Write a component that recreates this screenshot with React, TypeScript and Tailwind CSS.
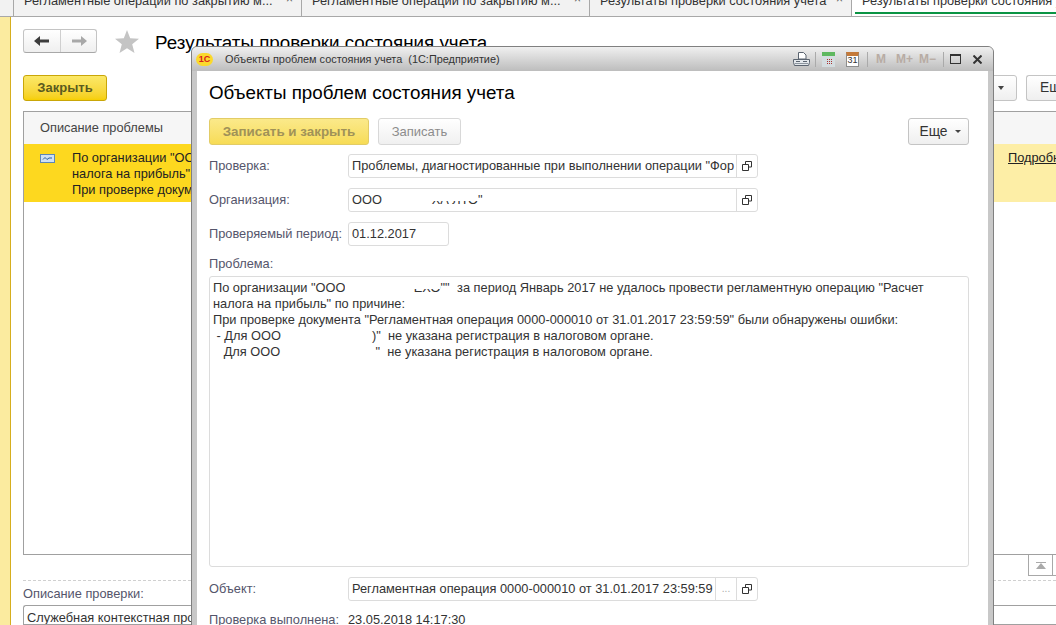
const tabTitle = "Регламентные операции по закрытию м...";

function Tab({ width, text }: { width: string; text: string }) {
  return (
    <div className={`${width} h-full shrink-0 border-r border-[#a8a8a8] overflow-hidden relative`}>
      <div className="absolute left-[10px] -top-[7px] whitespace-nowrap text-[12.8px] leading-[16px] text-[#333]">{text}</div>
      <div className="absolute right-[8px] -top-[9px] text-[12px] leading-[16px] text-[#555]">×</div>
    </div>
  );
}

function PickIcon() {
  return (
    <svg width="10" height="10" viewBox="0 0 10 10" fill="none" stroke="#333" strokeWidth="1">
      <path d="M3.5 3.5V.5h6v5.500h-3" />
      <path d="M.5 3.500h6v6h-6z" />
    </svg>
  );
}

function Field({ label, className, children, dots }: { label: string; className: string; children: React.ReactNode; dots?: boolean }) {
  return (
    <div className="flex items-center">
      <div className="w-[139px] shrink-0 text-[#55556b]">{label}</div>
      <div className={`${className} h-[24px] flex items-center border border-[#dcdcdc] rounded-[3px] bg-white`}>
        <div className="flex-1 min-w-0 pl-[3px] overflow-hidden whitespace-nowrap text-[#333] relative">{children}</div>
        {dots && <div className="w-[21px] h-full border-l border-[#dcdcdc] flex items-center justify-center text-[#aaa] text-[10px] leading-none">...</div>}
        <div className="w-[21px] h-full border-l border-[#dcdcdc] flex items-center justify-center shrink-0"><PickIcon /></div>
      </div>
    </div>
  );
}

function Redacted({ width, text }: { width: string; text: string }) {
  return (
    <span className={`${width} inline-block relative whitespace-nowrap text-right align-top h-[16px]`}>
      {text}
      <span className="absolute left-0 right-0 top-0 h-[9px] bg-white" />
    </span>
  );
}

export default function App() {
  return (
    <div className="w-[1056px] h-[625px] overflow-hidden relative bg-white flex flex-col text-[12.8px] leading-[16px] font-['Liberation_Sans',Arial,sans-serif]">
      {/* tabs */}
      <div className="h-[17px] shrink-0 flex border-b border-[#a8a8a8] bg-[#f2f2f2]">
        <div className="w-[14px] h-full shrink-0 border-r border-[#a8a8a8]" />
        <Tab width="w-[288px]" text={tabTitle} />
        <Tab width="w-[288px]" text={tabTitle} />
        <Tab width="w-[262px]" text="Результаты проверки состояния учета" />
        <div className="flex-1 h-full bg-white relative overflow-hidden">
          <div className="absolute left-[10px] -top-[7px] whitespace-nowrap text-[#333]">Результаты проверки состояния учета</div>
          <div className="absolute left-[3px] right-0 top-[12px] h-[2px] bg-[#0b9444]" />
        </div>
      </div>

      <div className="flex-1 flex min-h-0">
        <div className="w-[11px] shrink-0 bg-[#fbeb9f] border-r border-[#d6ae1e]" />
        <div className="flex-1 min-w-0 pl-[12px] pt-[12px] flex flex-col">
          {/* nav */}
          <div className="h-[24px] flex items-center">
            <div className="w-[74px] h-[24px] flex border border-[#c4c4c4] border-b-[#a8a8a8] rounded-[3px] bg-gradient-to-b from-white to-[#efefef]">
              <div className="w-[37px] flex items-center justify-center border-r border-[#cfcfcf]">
                <svg width="16" height="12" viewBox="0 0 16 12" fill="#3c3c3c"><path d="M0 6l6-5v3.500h9v3H6V11z" /></svg>
              </div>
              <div className="flex-1 flex items-center justify-center">
                <svg width="16" height="12" viewBox="0 0 16 12" fill="#a8a8a8"><path d="M16 6l-6-5v3.500H1v3h9V11z" /></svg>
              </div>
            </div>
            <svg className="ml-[18px]" width="24" height="23" viewBox="0 0 24 23" fill="#c4c4c4"><path d="M12 0l3.200 8.200 8.800.5-6.800 5.600 2.300 8.700L12 18.200l-7.500 4.800 2.300-8.700L0 8.700l8.800-.5z" /></svg>
            <div className="ml-[16px] text-[18.8px] leading-[24px] text-black whitespace-nowrap mt-[4px]">Результаты проверки состояния учета</div>
          </div>

          {/* command bar */}
          <div className="mt-[22px] h-[26px] flex">
            <div className="w-[84px] h-[26px] flex items-center justify-center rounded-[3px] border border-[#c9a608] bg-gradient-to-b from-[#fbe867] to-[#f6cf00] font-bold text-[13px] text-[#5a5a20]">Закрыть</div>
            <div className="ml-auto w-[39px] h-[26px] mr-[9px] flex items-center justify-center border border-[#c4c4c4] rounded-[3px] bg-gradient-to-b from-white to-[#efefef]">
              <div className="w-0 h-0 ml-[6px] border-x-[3px] border-x-transparent border-t-[4px] border-t-[#444]" />
            </div>
            <div className="w-[30px] h-[26px] pl-[13px] border border-r-0 border-[#c4c4c4] rounded-l-[3px] bg-gradient-to-b from-white to-[#efefef] text-[13.800px] leading-[24px] text-[#333] overflow-hidden">Еще</div>
          </div>

          {/* list */}
          <div className="mt-[10px] h-[444px] shrink-0 border border-r-0 border-[#a0a0a0] flex flex-col">
            <div className="h-[32px] shrink-0 bg-[#f6f6f6] pl-[16px] flex items-center text-[#444]">Описание проблемы</div>
            <div className="h-[58px] shrink-0 flex">
              <div className="flex-1 bg-[#fdd81f] flex pt-[6px] pl-[16px]">
                <svg className="mt-[4px]" width="15" height="9" viewBox="0 0 15 9"><rect x=".5" y=".5" width="14" height="8" fill="#cfe0f4" stroke="#5c86b8" /><path d="M3 5.500l2-2 2 2 2-1.500h3" fill="none" stroke="#2f5f9c" /></svg>
                <div className="ml-[17px] text-[#222] whitespace-nowrap">
                  По организации "ООО<br />
                  налога на прибыль" по причине:<br />
                  При проверке документа "Регламентная операция
                </div>
              </div>
              <div className="w-[62px] bg-[#fdeea6] pl-[14px] pt-[6px] overflow-hidden whitespace-nowrap text-[#222] underline">Подробнее</div>
            </div>
          </div>

          {/* splitter */}
          <div className="h-[26px] shrink-0 border-b border-dashed border-[#d0d0d0] flex justify-end">
            <div className="w-[25px] h-[21px] border border-t-0 border-[#a8a8a8] flex items-center justify-center">
              <svg width="10" height="7" viewBox="0 0 10 7" fill="#aaa"><path d="M0 0h10v1H0zM5 1l5 6H0z" /></svg>
            </div>
            <div className="w-[3px] h-[21px] border-b border-[#a8a8a8]" />
          </div>
          <div className="mt-[5px] text-[#55556b]">Описание проверки:</div>
          <div className="mt-[3px] h-[30px] border border-r-0 border-[#a0a0a0] rounded-tl-[3px] pl-[3px] pt-[4px] text-[#333] whitespace-nowrap overflow-hidden">Служебная контекстная проверка</div>
        </div>
      </div>

      {/* modal window */}
      <div className="absolute left-[191px] top-[46px] w-[803px] h-[590px] border border-[#808080] rounded-t-[6px] bg-[#c8c8c8] flex flex-col overflow-hidden">
        <div className="h-[24px] shrink-0 flex items-center bg-gradient-to-b from-[#f0f0f0] to-[#bdbdbd]">
          <div className="ml-[4px] w-[17px] h-[13px] rounded-full bg-[#fbd92b] flex items-center justify-center text-[9px] leading-none font-bold text-[#d8201c]">1С</div>
          <div className="ml-[12px] text-[10.900px] text-[#333] whitespace-nowrap">Объекты проблем состояния учета &nbsp;(1С:Предприятие)</div>
          <div className="ml-auto flex items-center">
            <svg width="17" height="14" viewBox="0 0 17 14" fill="none" stroke="#5b6470">
              <path d="M5.500.5h5l2.500 2.500v4H5.500z" fill="#fff" />
              <path d="M.5 7.500h16v3l-1 3h-14l-1-3z" fill="#e4e8ec" />
              <path d="M3 9.500h4M10 9.500h4" />
              <path d="M2 11.500h13" stroke="#8d96a0" />
            </svg>
            <div className="w-px h-[15px] bg-[#aaa] ml-[5px] mr-[6px]" />
            <svg width="13" height="15" viewBox="0 0 13 15"><rect width="13" height="15" fill="#d5dde0" /><rect width="13" height="4" fill="#5fb85f" /><path d="M5 7h1v1H5zM7 7h1v1H7zM9 7h1v1H9zM5 9h1v1H5zM7 9h1v1H7zM9 9h1v1H9zM5 11h1v1H5zM7 11h1v1H7zM9 11h1v1H9z" fill="#a33" /></svg>
            <div className="ml-[11px] w-[13px] h-[15px] bg-white border border-[#8d8d8d] border-t-[4px] border-t-[#c47a3a] flex items-center justify-center text-[9px] leading-none text-[#333]">31</div>
            <div className="w-px h-[15px] bg-[#aaa] ml-[8px] mr-[8px]" />
            <div className="w-[10px] text-[12px] font-bold text-[#b8aca4]">M</div>
            <div className="ml-[10px] text-[12px] font-bold text-[#b8aca4]">M+</div>
            <div className="ml-[6px] text-[12px] font-bold text-[#b8aca4]">M−</div>
            <div className="w-px h-[15px] bg-[#aaa] ml-[7px] mr-[6px]" />
            <div className="w-[11px] h-[10px] border border-[#333] border-t-2" />
            <svg className="ml-[12px] mr-[11px]" width="9" height="9" viewBox="0 0 9 9" stroke="#333" strokeWidth="2"><path d="M.5.500l8 8M8.500.500l-8 8" /></svg>
          </div>
        </div>
        <div className="flex-1 mx-[5px] mb-0 bg-white pl-[12px] pr-[19px] flex flex-col">
          <div className="mt-[10px] text-[18.8px] leading-[24px] text-black whitespace-nowrap">Объекты проблем состояния учета</div>
          <div className="mt-[13px] flex h-[27px]">
            <div className="w-[160px] flex items-center justify-center rounded-[3px] border border-[#e2cc66] bg-gradient-to-b from-[#fbe98a] to-[#f7dc55] font-bold text-[13.400px] text-[#a09258]">Записать и закрыть</div>
            <div className="ml-[9px] w-[83px] flex items-center justify-center rounded-[3px] border border-[#d8d8d8] bg-gradient-to-b from-white to-[#f0f0f0] text-[13px] text-[#8c8c8c]">Записать</div>
            <div className="ml-auto w-[61px] flex items-center justify-center gap-[7px] rounded-[3px] border border-[#c4c4c4] bg-gradient-to-b from-white to-[#efefef] text-[13.800px] text-[#333] pl-[3px]">
              Еще
              <div className="w-0 h-0 border-x-[3px] border-x-transparent border-t-[3px] border-t-[#444]" />
            </div>
          </div>
          <div className="mt-[9px] flex flex-col gap-[10px]">
            <Field label="Проверка:" className="w-[410px]">Проблемы, диагностированные при выполнении операции "Фор</Field>
            <Field label="Организация:" className="w-[410px]">
              ООО<Redacted width="w-[96px]" text="ХА ЛТО" />"
            </Field>
            <div className="flex items-center">
              <div className="w-[139px] shrink-0 text-[#55556b] whitespace-nowrap">Проверяемый период:</div>
              <div className="w-[101px] h-[24px] pl-[3px] border border-[#dcdcdc] rounded-[3px] flex items-center text-[#333]">01.12.2017</div>
            </div>
          </div>
          <div className="mt-[10px] text-[#55556b]">Проблема:</div>
          <div className="mt-[4px] h-[291px] shrink-0 border border-[#dcdcdc] rounded-[3px] pl-[3px] pt-[3px] text-[#333] whitespace-nowrap">
            <div>По организации "ООО<Redacted width="w-[95px]" text="ЕХО" />"" <span className="ml-[4px]">за период Январь 2017 не удалось провести регламентную операцию "Расчет</span></div>
            <div>налога на прибыль" по причине:</div>
            <div>При проверке документа "Регламентная операция 0000-000010 от 31.01.2017 23:59:59" были обнаружены ошибки:</div>
            <div>&nbsp;- Для ООО<span className="inline-block w-[100px] overflow-hidden text-right align-top h-[16px]">)"</span> &nbsp;не указана регистрация в налоговом органе.</div>
            <div>&nbsp; &nbsp;Для ООО<span className="inline-block w-[100px] overflow-hidden text-right align-top h-[16px]">"</span> &nbsp;не указана регистрация в налоговом органе.</div>
          </div>
          <div className="mt-[10px]">
            <Field label="Объект:" className="w-[410px]" dots>Регламентная операция 0000-000010 от 31.01.2017 23:59:59</Field>
          </div>
          <div className="mt-[11px] flex items-center">
            <div className="w-[139px] shrink-0 text-[#55556b] whitespace-nowrap">Проверка выполнена:</div>
            <div className="text-[#333]">23.05.2018 14:17:30</div>
          </div>
        </div>
      </div>
    </div>
  );
}
